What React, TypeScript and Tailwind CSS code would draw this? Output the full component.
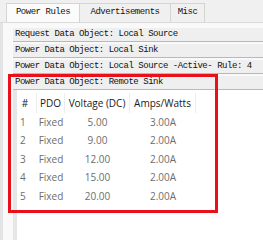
import React from "react";

const mono = "font-['Liberation_Mono',monospace] text-[9px] tracking-[-0.47px] text-[#111]";

const groups = [
  "Request Data Object: Local Source",
  "Power Data Object: Local Sink",
  "Power Data Object: Local Source -Active- Rule: 4",
];

const pdos = [
  { n: 1, type: "Fixed", volts: "5.00", amps: "3.00A" },
  { n: 2, type: "Fixed", volts: "9.00", amps: "2.00A" },
  { n: 3, type: "Fixed", volts: "12.00", amps: "2.00A" },
  { n: 4, type: "Fixed", volts: "15.00", amps: "2.00A" },
  { n: 5, type: "Fixed", volts: "20.00", amps: "2.00A" },
];

const GroupBar = ({ label }: { label: string }) => (
  <div className={`h-[14px] flex items-center pl-[2px] bg-[#efefef] border-b border-[#b9b9b9] whitespace-nowrap ${mono}`}>
    {label}
  </div>
);

export default function App() {
  return (
    <div className="relative w-[263px] h-[240px] overflow-hidden bg-[#f9f9f9]">
      {/* tab strip */}
      <div className={`flex h-[23px] pt-[3px] pl-[6px] bg-[#f0f0f0] border-b border-[#dadada] ${mono}`}>
        <div className="w-[74px] flex items-center justify-center bg-[#fbfbfb] border border-b-0 border-[#d4d4d4]">
          Power Rules
        </div>
        <div className="w-[91px] flex items-center justify-center border-t border-r border-[#d4d4d4]">
          Advertisements
        </div>
        <div className="w-[34px] flex items-center justify-center border-t border-r border-[#d4d4d4]">
          Misc
        </div>
      </div>

      <div className="flex h-[217px]">
        {/* left frame lines */}
        <div className="w-[3px] bg-[#e4e4e4]" />
        <div className="w-[10px]" />
        <div className="w-[4px] bg-[#e6e6e6] mt-[67px]" />
        <div className="flex-1 -ml-[4px] pt-[5px] flex flex-col">
          <div className="flex flex-col gap-[2px]">
            {groups.map((g) => (
              <GroupBar key={g} label={g} />
            ))}
            <GroupBar label="Power Data Object: Remote Sink" />
          </div>

          {/* pdo table */}
          <div className="flex-1 bg-white ml-[4px] pt-[3px] font-['Open_Sans',sans-serif] text-[10px]">
            <div className="flex h-[20px] items-center text-[#1a1a1a] -ml-[3px]">
              <div className="w-[23px] text-center border-r border-[#ececec] h-full flex items-center justify-center">#</div>
              <div className="w-[28px] text-center border-r border-[#ececec] h-full flex items-center justify-center">PDO</div>
              <div className="w-[65px] text-center border-r border-[#ececec] h-full flex items-center justify-center">Voltage (DC)</div>
              <div className="w-[66px] text-center border-r border-[#ececec] h-full flex items-center justify-center">Amps/Watts</div>
            </div>
            {pdos.map((p) => (
              <div key={p.n} className="flex h-[18.5px] items-center text-[#6d6d6d] -ml-[3px]">
                <div className="w-[23px] pl-[6px]">{p.n}</div>
                <div className="w-[28px] text-center">{p.type}</div>
                <div className="w-[65px] text-center">{p.volts}</div>
                <div className="w-[66px] text-center">{p.amps}</div>
              </div>
            ))}
          </div>
        </div>
      </div>

      {/* annotation box */}
      <div className="absolute left-[8px] top-[74px] w-[210px] h-[139px] border-[3px] border-[#e8111b]" />
    </div>
  );
}
